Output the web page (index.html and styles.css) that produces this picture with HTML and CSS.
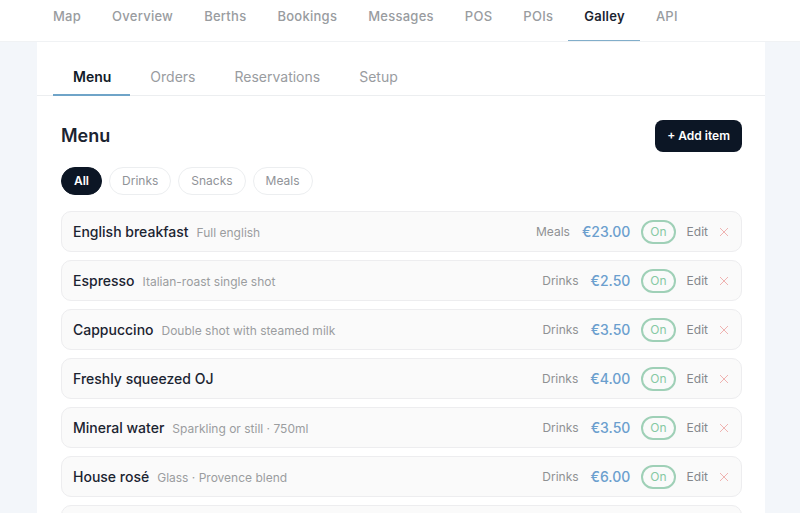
FILE: index.html
```html
<!DOCTYPE html>
<html lang="en">
<head>
    <meta charset="UTF-8">
    <title>Galley</title>
    <link rel="stylesheet" href="styles.css">
</head>
<body>
<header class="topbar">
    <nav class="main-nav">
        <a href="#map">Map</a>
        <a href="#overview">Overview</a>
        <a href="#berths">Berths</a>
        <a href="#bookings">Bookings</a>
        <a href="#messages">Messages</a>
        <a href="#pos">POS</a>
        <a href="#pois">POIs</a>
        <a href="#galley" class="active">Galley</a>
        <a href="#api">API</a>
    </nav>
</header>
<main class="panel">
    <nav class="sub-nav">
        <a href="#menu" class="active">Menu</a>
        <a href="#orders">Orders</a>
        <a href="#reservations">Reservations</a>
        <a href="#setup">Setup</a>
    </nav>
    <section class="content">
        <div class="heading">
            <h1>Menu</h1>
            <button type="button" class="add">+ Add item</button>
        </div>
        <div class="filters">
            <button type="button" class="chip active">All</button>
            <button type="button" class="chip">Drinks</button>
            <button type="button" class="chip">Snacks</button>
            <button type="button" class="chip">Meals</button>
        </div>
        <ul class="items">
            <li class="item">
                <span class="name">English breakfast</span>
                <span class="desc">Full english</span>
                <span class="category">Meals</span>
                <span class="price">€23.00</span>
                <button type="button" class="status">On</button>
                <button type="button" class="edit">Edit</button>
                <button type="button" class="remove" aria-label="Remove English breakfast"><svg viewBox="0 0 10 10"><path d="M1 1l8 8M9 1l-8 8"/></svg></button>
            </li>
            <li class="item">
                <span class="name">Espresso</span>
                <span class="desc">Italian-roast single shot</span>
                <span class="category">Drinks</span>
                <span class="price">€2.50</span>
                <button type="button" class="status">On</button>
                <button type="button" class="edit">Edit</button>
                <button type="button" class="remove" aria-label="Remove Espresso"><svg viewBox="0 0 10 10"><path d="M1 1l8 8M9 1l-8 8"/></svg></button>
            </li>
            <li class="item">
                <span class="name">Cappuccino</span>
                <span class="desc">Double shot with steamed milk</span>
                <span class="category">Drinks</span>
                <span class="price">€3.50</span>
                <button type="button" class="status">On</button>
                <button type="button" class="edit">Edit</button>
                <button type="button" class="remove" aria-label="Remove Cappuccino"><svg viewBox="0 0 10 10"><path d="M1 1l8 8M9 1l-8 8"/></svg></button>
            </li>
            <li class="item">
                <span class="name">Freshly squeezed OJ</span>
                <span class="category">Drinks</span>
                <span class="price">€4.00</span>
                <button type="button" class="status">On</button>
                <button type="button" class="edit">Edit</button>
                <button type="button" class="remove" aria-label="Remove Freshly squeezed OJ"><svg viewBox="0 0 10 10"><path d="M1 1l8 8M9 1l-8 8"/></svg></button>
            </li>
            <li class="item">
                <span class="name">Mineral water</span>
                <span class="desc">Sparkling or still · 750ml</span>
                <span class="category">Drinks</span>
                <span class="price">€3.50</span>
                <button type="button" class="status">On</button>
                <button type="button" class="edit">Edit</button>
                <button type="button" class="remove" aria-label="Remove Mineral water"><svg viewBox="0 0 10 10"><path d="M1 1l8 8M9 1l-8 8"/></svg></button>
            </li>
            <li class="item">
                <span class="name">House rosé</span>
                <span class="desc">Glass · Provence blend</span>
                <span class="category">Drinks</span>
                <span class="price">€6.00</span>
                <button type="button" class="status">On</button>
                <button type="button" class="edit">Edit</button>
                <button type="button" class="remove" aria-label="Remove House rosé"><svg viewBox="0 0 10 10"><path d="M1 1l8 8M9 1l-8 8"/></svg></button>
            </li>
            <li class="item"></li>
        </ul>
    </section>
</main>
</body>
</html>
```
FILE: styles.css
```css
* {
    margin: 0;
    padding: 0;
    box-sizing: border-box;
}

body {
    display: flex;
    flex-direction: column;
    height: 100vh;
    overflow: hidden;
    background: #f3f6fa;
    color: #1b2431;
    font-family: Inter, "Liberation Sans", sans-serif;
    font-size: 13px;
}

a {
    color: #999c9f;
    font-weight: 500;
    text-decoration: none;
}

button {
    font-family: inherit;
    background: none;
    border: none;
    cursor: pointer;
}

.topbar {
    flex: none;
    padding: 0 37px;
    background: #fff;
    border-bottom: 1px solid #f0f2f4;
}

.main-nav {
    display: flex;
}

.main-nav a {
    padding: 8px 15px 16px 16px;
    line-height: 16px;
    letter-spacing: .02em;
    border-bottom: 1px solid transparent;
}

.main-nav a.active {
    color: #1b2431;
    font-weight: 600;
    border-color: #82aeca;
}

.panel {
    flex: 1;
    min-height: 0;
    margin: 0 35px 0 37px;
    background: #fff;
}

.sub-nav {
    display: flex;
    padding: 12px 16px 0;
    border-bottom: 1px solid #eceef0;
}

.sub-nav a {
    margin-bottom: -1px;
    padding: 13px 19px 7px 20px;
    font-size: 14px;
    font-weight: 400;
    line-height: 20px;
    border-bottom: 2px solid transparent;
}

.sub-nav a.active {
    color: #111a28;
    font-weight: 600;
    border-color: #6fa4c8;
}

.content {
    padding: 24px 23px 24px 24px;
}

.heading {
    display: flex;
    align-items: center;
    justify-content: space-between;
    margin-bottom: 15px;
}

.heading h1 {
    font-size: 18px;
    font-weight: 600;
    line-height: 24px;
}

.add {
    padding: 8px 12px;
    border-radius: 8px;
    background: #0c1625;
    color: #fff;
    font-size: 12px;
    font-weight: 600;
    line-height: 16px;
}

.filters {
    display: flex;
    gap: 7px;
    margin-bottom: 16px;
}

.chip {
    padding: 5px 12px;
    border: 1px solid #eceef0;
    border-radius: 14px;
    color: #909398;
    font-size: 12px;
    line-height: 16px;
}

.chip.active {
    background: #0c1625;
    border-color: #0c1625;
    color: #fff;
    font-weight: 600;
}

.items {
    display: flex;
    flex-direction: column;
    gap: 8px;
    list-style: none;
}

.item {
    display: flex;
    align-items: center;
    min-height: 41px;
    padding: 0 12px 0 11px;
    background: #fafafa;
    border: 1px solid #ededef;
    border-radius: 10px;
}

.name {
    margin-right: 8px;
    font-size: 14px;
    font-weight: 500;
}

.desc {
    padding-top: 2px;
    color: #9b9d9f;
    font-size: 12px;
}

.category {
    margin-left: auto;
    color: #8f9193;
    font-size: 12px;
}

.price {
    margin: 0 11px 0 12px;
    color: #6b9fce;
    font-size: 14px;
    font-weight: 500;
}

.status {
    padding: 2px 7px;
    border: 2px solid #9fd0b7;
    border-radius: 12px;
    color: #86c9a3;
    font-size: 12px;
    line-height: 16px;
}

.edit {
    margin: 0 11px;
    color: #85888c;
    font-size: 12px;
}

.remove svg {
    display: block;
    width: 10px;
    height: 10px;
    fill: none;
    stroke: #efb3b1;
    stroke-width: 1;
}
```
